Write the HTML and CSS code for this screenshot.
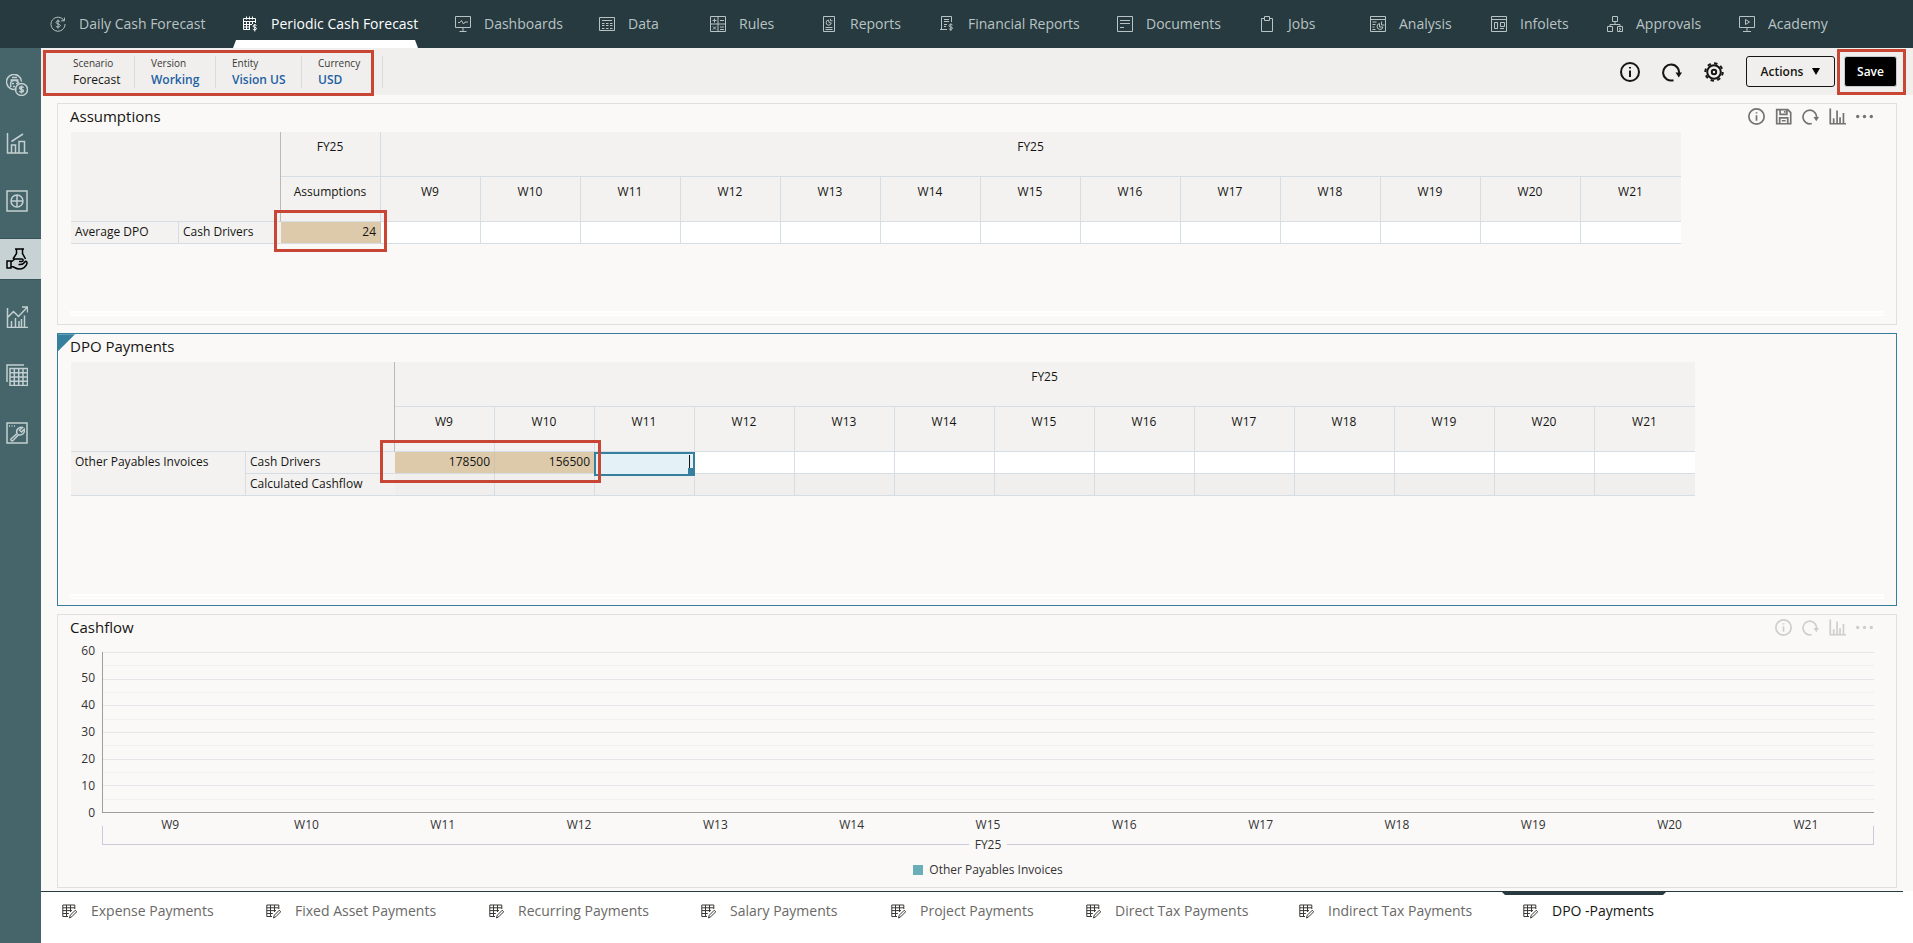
FILE: index.html
```html
<!DOCTYPE html>
<html lang="en">
<head>
<meta charset="utf-8">
<title>Periodic Cash Forecast</title>
<meta name="viewport" content="width=device-width, initial-scale=1">
<link rel="stylesheet" href="styles.css">
</head>
<body>
<svg class="sprite" aria-hidden="true">
  <symbol id="i-daily" viewBox="0 0 16 16"><path d="M14 4.6A7 7 0 1 0 15 8M14.4 1.6v3.2h-3.2M10.2 5.8C9.6 4.6 6 4.5 6 6.4s4.3 1.2 4.3 3.1S6.400 11.500 5.800 10.200M8 3.500v9"/></symbol>
  <symbol id="i-periodic" viewBox="0 0 16 16"><path d="M8 13.500H1.500v-11h12V7M1.500 5.500h12M4.500 .5v3M7.500 .5v3M10.500 .5v3M4.500 6v7M7.500 6v7M10.500 6v2M2 8.500h8M2 11h6M14.500 9.500c-.5-1-3.500-1-3.500.6s3.500.8 3.500 2.400-3 1.600-3.700.5M12.800 8v7.500"/></symbol>
  <symbol id="i-dash" viewBox="0 0 16 16"><path d="M.5.5h15v11H.5zM8 11.500v4M4.500 15.500h7M3 6.500h2l1.500-2 2 3.500L10 6h3"/></symbol>
  <symbol id="i-data" viewBox="0 0 16 16"><path d="M.5 1.500h15v13H.5zM3 4.500h10M3 7.500h2.500M7 7.500h2.500M11 7.500h2.500M3 9.500h2.500M7 9.500h2.500M11 9.500h2.500M3 12.500h2.500M7 12.500h2.500M11 12.500h2.500"/></symbol>
  <symbol id="i-rules" viewBox="0 0 16 16"><path d="M.5.5h15v15H.5zM8 .5v15M.5 8h15M4.500 2.500v4M2.500 4.500h4M10 4.500h4M3 10.500l3 3M6 10.500l-3 3M10 11h4M10 13.500h4"/></symbol>
  <symbol id="i-reports" viewBox="0 0 16 16"><path d="M2.500.5h11v15h-11zM4.500 11.500h7M4.500 13.500h7M7.500 4a2.600 2.600 0 1 0 2.800 3L8 6.500zM9.500 2.800v2h2"/></symbol>
  <symbol id="i-fin" viewBox="0 0 16 16"><path d="M8 13.500H2.500V.500h10V6M1 13.500h5M5 3.500h5M5 5.500h5M5 8.500h3M5 10.500h2M13.500 9c-.5-1-3.500-1-3.500.7s3.500.8 3.500 2.400-3 1.600-3.700.5M11.800 7.500v7.500"/></symbol>
  <symbol id="i-docs" viewBox="0 0 16 16"><path d="M.5.500h15v15H.5zM3 4.500h10M3 7.500h10M3 11.500h4"/></symbol>
  <symbol id="i-jobs" viewBox="0 0 16 16"><path d="M5.500 2.500h-3v13h11v-13h-3M5.500.500h5v4h-5z"/></symbol>
  <symbol id="i-analysis" viewBox="0 0 16 16"><path d="M.5.500h15v15H.5zM.5 3.500h15M2.500 6h4M2.500 8.500h3M2.500 11h2M2.500 13.500h3M9.500 7.500a3 3 0 1 0 3.500 3.500h-3.500zM11.500 5.500v3.500h3"/></symbol>
  <symbol id="i-infolets" viewBox="0 0 16 16"><path d="M.5.500h15v15H.5zM.5 3.500h15M3.500 6.500h3v6h-3zM9.500 6.500h4v4h-4zM9 12.500h4"/></symbol>
  <symbol id="i-approvals" viewBox="0 0 16 16"><path d="M5.500.500h5v5h-5zM8 5.500v3M3 11V8.500h10V11M.5 10.500h5v5h-5zM10.500 10.500h5v5h-5zM12 12l2 1.300-2 1.200"/></symbol>
  <symbol id="i-academy" viewBox="0 0 16 16"><path d="M.5.500h15v11H.5zM8 11.500v4M4 15.500h8M6.500 3.500v5l4-2.500z"/></symbol>

  <symbol id="s-cash" viewBox="0 0 22 22"><path d="M10.500 15A7.500 7.500 0 1 1 15.500 7.500M5 13c-1-4 0-6 2-6.500h3c1.500.5 2.500 1.500 3 3M4.500 6h8M6 3.500h5M6 9.500h2M10 9.500h2M7 12.500h2"/><circle cx="15.500" cy="15.500" r="6"/><path d="M17.500 13.700c-.6-1.300-4-1.200-4 .4s4 1 4 2.700-3.500 1.500-4 .2M15.500 11.500v8"/></symbol>
  <symbol id="s-bars" viewBox="0 0 22 22"><path d="M1.500 1v20H22M5.500 21v-8h4v8M13 21V9.500h5.500V21M5.500 9.500L17 2"/></symbol>
  <symbol id="s-plus" viewBox="0 0 22 22"><path d="M1 1h20v20H1zM11 5v12M5 11h12"/><circle cx="11" cy="11" r="6"/></symbol>
  <symbol id="s-hand" viewBox="0 0 22 22"><path d="M9 1h9M10.500 1.500v4L7 11M16.500 1.500v4l3 5.500M1 13h4v7H1zM5 14l4-3h7c1.500 0 1.500 2.500 0 2.500h-3M5 18.500c4 0 4 2.500 8 2.500s7-2.500 8-5.500c.3-2-1.500-3-2-1.500-1.500 2-3 3-6.500 2.500"/></symbol>
  <symbol id="s-trend" viewBox="0 0 22 22"><path d="M1.500 2v19.500H22M2 11l5.500-5.500 5 5L21 1.500M16 1h5.500v5.500M5.500 21v-6M9.500 21v-9M13 21v-6M18.500 21V9.500M15.500 21v-8"/></symbol>
  <symbol id="s-grid" viewBox="0 0 22 22"><path d="M1 18V1h17M4 4.500h17.500v17H4zM8.300 4.500v17M12.700 4.500v17M17 4.500v17M4 8.700h17.500M4 13h17.500M4 17.200h17.500"/></symbol>
  <symbol id="s-tool" viewBox="0 0 22 22"><path d="M1 1h20v20H1zM3 4h1M5.500 4h1M8 4h1M16.500 5.500a4.500 4.500 0 0 0-5.500 6l-6 5.500c-.8 1 .8 2.500 1.800 1.700l5.700-6a4.500 4.500 0 0 0 5.800-5.500L15.500 10 13.500 8z"/></symbol>

  <symbol id="t-info" viewBox="0 0 20 20"><circle cx="10" cy="10" r="9"/><path d="M10 8.500V15M10 5v1.600"/></symbol>
  <symbol id="t-refresh" viewBox="0 0 20 20"><path d="M11.500 18.200A8 8 0 1 1 17 12"/><path class="solid" d="M13.500 10.500h6.500l-3.200 5z"/></symbol>
  <symbol id="t-gear" viewBox="0 0 20 20"><circle cx="10" cy="10" r="6.800"/><circle cx="10" cy="10" r="2.200"/><circle class="teeth" cx="10" cy="10" r="8.700"/></symbol>
  <symbol id="t-save" viewBox="0 0 20 20"><path d="M2 2h13l3.500 3.500V18.500H2zM6 2v5.500h8V2M5.500 18.500v-7h9.500v7M8 15h4.500M11.500 3.500v2"/></symbol>
  <symbol id="t-chart" viewBox="0 0 20 20"><path d="M1.500.500V18.500H20M5.500 18V12M9.500 18V3M13 18v-7M17 18V6"/></symbol>
  <symbol id="t-more" viewBox="0 0 20 20"><circle class="solid" cx="2" cy="10" r="2"/><circle class="solid" cx="10" cy="10" r="2"/><circle class="solid" cx="18" cy="10" r="2"/></symbol>
  <symbol id="b-form" viewBox="0 0 15 15"><path d="M6 12.500H.8V1h12v4M.8 3.800h12M4.500 1v11.500M8.500 1v7M.8 6.600H10M.8 9.500h6M7.500 14l.8-2.800 5-5 1.400 1.600-5 5z"/></symbol>
</svg>

<header class="topnav">
  <nav aria-label="Clusters">
    <ul class="clusters">
      <li><a href="#"><svg><use href="#i-daily"/></svg>Daily Cash Forecast</a></li>
      <li class="current"><a href="#" aria-current="page"><svg><use href="#i-periodic"/></svg>Periodic Cash Forecast</a></li>
      <li><a href="#"><svg><use href="#i-dash"/></svg>Dashboards</a></li>
      <li><a href="#"><svg><use href="#i-data"/></svg>Data</a></li>
      <li><a href="#"><svg><use href="#i-rules"/></svg>Rules</a></li>
      <li><a href="#"><svg><use href="#i-reports"/></svg>Reports</a></li>
      <li><a href="#"><svg><use href="#i-fin"/></svg>Financial Reports</a></li>
      <li><a href="#"><svg><use href="#i-docs"/></svg>Documents</a></li>
      <li><a href="#"><svg><use href="#i-jobs"/></svg>Jobs</a></li>
      <li><a href="#"><svg><use href="#i-analysis"/></svg>Analysis</a></li>
      <li><a href="#"><svg><use href="#i-infolets"/></svg>Infolets</a></li>
      <li><a href="#"><svg><use href="#i-approvals"/></svg>Approvals</a></li>
      <li><a href="#"><svg><use href="#i-academy"/></svg>Academy</a></li>
    </ul>
  </nav>
</header>

<div class="shell">
  <nav class="sidebar" aria-label="Cards">
    <a href="#" aria-label="Cash summary"><svg><use href="#s-cash"/></svg></a>
    <a href="#" aria-label="Drivers"><svg><use href="#s-bars"/></svg></a>
    <a href="#" aria-label="Receipts"><svg><use href="#s-plus"/></svg></a>
    <a href="#" aria-label="Payments" class="current"><svg><use href="#s-hand"/></svg></a>
    <a href="#" aria-label="Trends"><svg><use href="#s-trend"/></svg></a>
    <a href="#" aria-label="Grids"><svg><use href="#s-grid"/></svg></a>
    <a href="#" aria-label="Settings"><svg><use href="#s-tool"/></svg></a>
  </nav>

  <div class="workspace">
    <div class="toolbar">
      <div class="pov-wrap">
        <dl class="pov">
          <div><dt>Scenario</dt><dd>Forecast</dd></div>
          <div><dt>Version</dt><dd><a href="#">Working</a></dd></div>
          <div><dt>Entity</dt><dd><a href="#">Vision US</a></dd></div>
          <div><dt>Currency</dt><dd><a href="#">USD</a></dd></div>
        </dl>
        <span class="callout callout-pov"></span>
      </div>
      <div class="tools">
        <button class="icon" aria-label="Information"><svg><use href="#t-info"/></svg></button>
        <button class="icon" aria-label="Refresh"><svg><use href="#t-refresh"/></svg></button>
        <button class="icon" aria-label="Settings"><svg><use href="#t-gear"/></svg></button>
        <button class="actions">Actions<span class="caret"></span></button>
        <div class="save-wrap"><button class="save">Save</button><span class="callout callout-save"></span></div>
      </div>
    </div>

    <main class="panels">
      <section class="panel panel-a">
        <div class="panel-head">
          <h2>Assumptions</h2>
          <div class="panel-tools">
            <button aria-label="Information"><svg><use href="#t-info"/></svg></button>
            <button aria-label="Save form"><svg><use href="#t-save"/></svg></button>
            <button aria-label="Refresh form"><svg><use href="#t-refresh"/></svg></button>
            <button aria-label="Chart"><svg><use href="#t-chart"/></svg></button>
            <button aria-label="More"><svg><use href="#t-more"/></svg></button>
          </div>
        </div>
        <div class="grid-wrap">
          <table class="grid grid-a">
            <colgroup><col class="c-dpo"><col class="c-driver"><col span="14"></colgroup>
            <thead>
              <tr><td class="corner" colspan="2" rowspan="2"></td><th>FY25</th><th colspan="13">FY25</th></tr>
              <tr><th>Assumptions</th><th>W9</th><th>W10</th><th>W11</th><th>W12</th><th>W13</th><th>W14</th><th>W15</th><th>W16</th><th>W17</th><th>W18</th><th>W19</th><th>W20</th><th>W21</th></tr>
            </thead>
            <tbody>
              <tr><th class="row">Average DPO</th><th class="row last">Cash Drivers</th><td class="dirty">24<span class="callout callout-one"></span></td><td></td><td></td><td></td><td></td><td></td><td></td><td></td><td></td><td></td><td></td><td></td><td></td><td></td></tr>
            </tbody>
          </table>
        </div>
        <div class="track"></div>
      </section>

      <section class="panel panel-b selected">
        <div class="panel-head"><h2>DPO Payments</h2></div>
        <div class="grid-wrap">
          <table class="grid grid-b">
            <colgroup><col class="c-account"><col class="c-flow"><col span="13"></colgroup>
            <thead>
              <tr><td class="corner" colspan="2" rowspan="2"></td><th colspan="13">FY25</th></tr>
              <tr><th>W9</th><th>W10</th><th>W11</th><th>W12</th><th>W13</th><th>W14</th><th>W15</th><th>W16</th><th>W17</th><th>W18</th><th>W19</th><th>W20</th><th>W21</th></tr>
            </thead>
            <tbody>
              <tr><th class="row" rowspan="2">Other Payables Invoices</th><th class="row last">Cash Drivers</th><td class="dirty">178500<span class="callout callout-two"></span></td><td class="dirty">156500</td><td class="editing"><input type="text" aria-label="Cash Drivers W11"></td><td></td><td></td><td></td><td></td><td></td><td></td><td></td><td></td><td></td><td></td></tr>
              <tr class="calc"><th class="row last">Calculated Cashflow</th><td></td><td></td><td></td><td></td><td></td><td></td><td></td><td></td><td></td><td></td><td></td><td></td><td></td></tr>
            </tbody>
          </table>
        </div>
        <div class="track"></div>
      </section>

      <section class="panel panel-c">
        <div class="panel-head">
          <h2>Cashflow</h2>
          <div class="panel-tools muted">
            <button aria-label="Chart information"><svg><use href="#t-info"/></svg></button>
            <button aria-label="Refresh chart"><svg><use href="#t-refresh"/></svg></button>
            <button aria-label="Chart type"><svg><use href="#t-chart"/></svg></button>
            <button aria-label="More chart options"><svg><use href="#t-more"/></svg></button>
          </div>
        </div>
        <div class="chart">
          <div class="y-axis"><span>60</span><span>50</span><span>40</span><span>30</span><span>20</span><span>10</span><span>0</span></div>
          <div class="plot"><i></i><i></i><i></i><i></i><i></i><i></i><i></i><i></i><i></i><i></i><i></i><i></i></div>
          <div class="x-axis">
            <div class="weeks"><span>W9</span><span>W10</span><span>W11</span><span>W12</span><span>W13</span><span>W14</span><span>W15</span><span>W16</span><span>W17</span><span>W18</span><span>W19</span><span>W20</span><span>W21</span></div>
            <div class="year"><span>FY25</span></div>
            <div class="legend"><span class="swatch"></span>Other Payables Invoices</div>
          </div>
        </div>
      </section>
    </main>

    <nav class="tabs" aria-label="Forms">
      <ul>
        <li><a href="#"><svg><use href="#b-form"/></svg>Expense Payments</a></li>
        <li><a href="#"><svg><use href="#b-form"/></svg>Fixed Asset Payments</a></li>
        <li><a href="#"><svg><use href="#b-form"/></svg>Recurring Payments</a></li>
        <li><a href="#"><svg><use href="#b-form"/></svg>Salary Payments</a></li>
        <li><a href="#"><svg><use href="#b-form"/></svg>Project Payments</a></li>
        <li><a href="#"><svg><use href="#b-form"/></svg>Direct Tax Payments</a></li>
        <li><a href="#"><svg><use href="#b-form"/></svg>Indirect Tax Payments</a></li>
        <li class="current"><a href="#" aria-current="page"><svg><use href="#b-form"/></svg>DPO -Payments</a></li>
      </ul>
    </nav>
  </div>
</div>
</body>
</html>
```

FILE: styles.css
```css
*, *::before, *::after { box-sizing: border-box; }

body {
  margin: 0;
  min-height: 100vh;
  display: flex;
  flex-direction: column;
  background: #faf9f8;
  color: #161513;
  font: 12px/16px "Open Sans", "Noto Sans", sans-serif;
}

ul, dl, dd, h2 { margin: 0; padding: 0; }
ul { list-style: none; }
a { color: inherit; text-decoration: none; }
button { font: inherit; color: inherit; padding: 0; border: 0; background: none; cursor: pointer; }
svg { fill: none; stroke: currentColor; flex: none; display: block; }
.sprite { position: absolute; width: 0; height: 0; }
.solid { fill: currentColor; stroke: none; }
.teeth { stroke-width: 2; stroke-dasharray: 3.4 3.4; }

/* Top navigation */
.topnav { background: #263a40; color: #bac3c3; height: 48px; padding-left: 30px; }
.clusters {
  display: grid;
  grid-template-columns: 192px 213px 144px 111px 111px 118px 178px 142px 111px 121px 116px 132px 128px;
}
.clusters li { position: relative; }
.clusters a { display: flex; align-items: center; gap: 13px; height: 48px; padding-left: 20px; font-size: 14px; white-space: nowrap; }
.clusters svg { width: 16px; height: 16px; }
.clusters .current { color: #fff; }
.clusters .current::after {
  content: "";
  position: absolute;
  left: 11px; right: 17px; bottom: 0;
  height: 8px;
  background: #fff;
  clip-path: polygon(3px 0, calc(100% - 3px) 0, 100% 100%, 0 100%);
}

/* Shell */
.shell { flex: 1; display: flex; }
.sidebar { width: 41px; flex: none; background: #45656b; color: #c3cfd0; padding-top: 16px; display: flex; flex-direction: column; gap: 16px; }
.sidebar a { height: 42px; display: flex; align-items: center; padding-left: 6px; }
.sidebar svg { width: 22px; height: 22px; stroke-width: 1.5; }
.sidebar .current { background: #c7d2d4; color: #000; border: solid #38545a; border-width: 1px 0; }
.workspace { flex: 1; min-width: 0; display: flex; flex-direction: column; }

/* Toolbar */
.toolbar { height: 47px; background: #f0efed; display: flex; justify-content: space-between; align-items: center; padding: 0 16px; }
.pov-wrap { position: relative; }
.pov { display: grid; grid-template-columns: 78px 81px 86px 81px; }
.pov div { height: 32px; padding-left: 16px; border-right: 1px solid #dcdbd9; }
.pov dt { font-size: 10px; line-height: 14px; color: #3a3835; }
.pov dd { line-height: 20px; white-space: nowrap; }
.pov a { color: #1f5fa3; font-weight: 600; }
.callout { position: absolute; border: 3px solid #c74634; pointer-events: none; z-index: 2; }
.callout-pov { left: -14px; right: 9px; top: -6px; bottom: -8px; }
.callout-save { inset: -7px -9px -8px -7px; }
.callout-one { left: -7px; right: -7px; top: -12px; bottom: -9px; }
.callout-two { left: -15px; top: -12px; width: 221px; height: 43px; }
.tools { display: flex; align-items: center; }
.icon { margin-right: 22px; }
.icon svg { width: 20px; height: 20px; stroke-width: 2; }
.actions, .save { height: 31px; border-radius: 3px; font-weight: 600; display: flex; align-items: center; justify-content: center; }
.actions { width: 89px; border: 1px solid #161513; gap: 9px; margin-right: 9px; }
.caret { border: 4px solid transparent; border-top: 7px solid #000; border-bottom: 0; }
.save-wrap { position: relative; }
.save { width: 53px; background: #000; color: #fff; border: 1px solid #c4cdd2; }

/* Panels */
.panels { flex: 1; display: flex; flex-direction: column; gap: 8px; padding: 8px 16px 3px; }
.panel { position: relative; display: flex; flex-direction: column; flex-basis: 0; border: 1px solid #e1e0de; padding: 0 12px; }
.panel-a { flex-grow: 222; }
.panel-b { flex-grow: 273; }
.panel-c { flex-grow: 274; }
.panel.selected { border-color: #367f9e; }
.panel.selected::before {
  content: "";
  position: absolute;
  left: 0; top: 0;
  width: 17px; height: 17px;
  background: #367f9e;
  clip-path: polygon(0 0, 100% 0, 0 100%);
}
.panel-head { display: flex; justify-content: space-between; align-items: center; height: 24px; margin-bottom: 4px; }
.panel h2 { font-size: 15px; line-height: 20px; font-weight: 400; position: relative; }
.panel-tools { display: flex; gap: 10px; color: #75736f; padding-right: 11px; }
.panel-tools svg { width: 17px; height: 17px; stroke-width: 2; }
.panel-tools.muted { color: #cfcecc; }
.grid-wrap { flex: 1; overflow-x: auto; overflow-y: hidden; padding-left: 1px; }
.track { height: 5px; margin: 0 0 8px; border: solid #fff; border-width: 2px 0; }
.panel-b .track { margin-bottom: 6px; }

/* Data grids */
.grid { table-layout: fixed; border-collapse: separate; border-spacing: 0; }
.grid-a { width: 1610px; }
.grid-b { width: 1624px; }
.grid col { width: 100px; }
.grid .c-dpo { width: 108px; }
.grid .c-driver { width: 102px; }
.grid .c-account { width: 175px; }
.grid .c-flow { width: 149px; }
.grid th, .grid td { font-weight: 400; padding: 0; border: solid #d5dde5; border-width: 0 1px 1px 0; }
.grid tr > :last-child { border-right: 0; }
.grid thead th { height: 45px; background: #f3f2f0; vertical-align: top; padding: 7px 1px 0 0; }
.grid .corner { background: #f3f2f0; border-right-color: #b9b9b9; }
.grid tbody td { height: 22px; background: #fff; text-align: right; padding: 0 4px 2px 0; position: relative; }
.grid .row { background: #f3f2f0; text-align: left; vertical-align: top; height: 22px; padding: 2px 4px 0; white-space: nowrap; }
.grid .last { border-right-color: #f3f2f0; }
.grid tbody .dirty { background: #dccaab; border-right-color: #d0c3a9; }
.grid .calc td { background: #f0efed; }
.grid tbody .editing { padding: 0; }
.editing input {
  position: absolute;
  inset: 0 -1px -2px -1px;
  width: calc(100% + 2px);
  height: 24px;
  border: 2px solid #367f9e;
  background: #e4f1f7;
  padding: 0 4px;
  font: inherit;
  text-align: right;
  border-radius: 0;
  outline: 0;
  z-index: 1;
}
.editing::before { content: ""; position: absolute; z-index: 2; right: 4px; top: 3px; width: 1px; height: 13px; background: #161513; }
.editing::after { content: ""; position: absolute; z-index: 2; right: -1px; bottom: -2px; width: 7px; height: 7px; background: #367f9e; }

/* Chart */
.chart { flex: 1; display: grid; grid-template: 1fr auto / 32px 1fr; padding: 9px 10px 0 0; color: #333; }
.y-axis { display: flex; flex-direction: column; justify-content: space-between; margin: -9px 7px -8px 0; text-align: right; }
.plot { display: grid; grid-template-rows: repeat(12, 1fr); border: solid #9e9e9e; border-width: 0 0 1px 1px; }
.plot i { border-top: 1px solid #f0f0ef; }
.plot i:nth-child(odd) { border-top-color: #e4e6e9; }
.x-axis { grid-column: 2; text-align: center; padding-top: 4px; }
.weeks { display: grid; grid-template-columns: repeat(13, 1fr); }
.year { display: grid; grid-template-columns: 1fr auto 1fr; gap: 6px; align-items: end; margin-top: -7px; }
.year::before, .year::after { content: ""; height: 19px; border: solid #cbcada; border-width: 0 0 1px 1px; margin-bottom: 8px; }
.year::after { border-width: 0 1px 1px 0; }
.year span { padding-top: 11px; }
.legend { display: flex; justify-content: center; align-items: center; gap: 6px; padding: 9px 0; }
.swatch { width: 10px; height: 10px; background: #6aafb8; }

/* Form tabs */
.tabs { position: relative; background: #fff; min-height: 52px; color: #6b6966; }
.tabs::before { content: ""; display: block; height: 1px; margin-right: 10px; background: #263a40; }
.tabs ul { display: grid; grid-template-columns: 204px 223px 212px 190px 195px 213px 221px 167px; }
.tabs li { position: relative; }
.tabs a { display: flex; align-items: center; gap: 14px; height: 38px; padding-left: 21px; font-size: 14px; white-space: nowrap; }
.tabs svg { width: 15px; height: 15px; color: #3a3835; }
.tabs .current { color: #161513; }
.tabs .current a { padding-left: 24px; }
.tabs .current::before {
  content: "";
  position: absolute;
  top: 0; left: 3px; right: 0;
  height: 3px;
  background: #263a40;
  clip-path: polygon(0 0, 100% 0, calc(100% - 3px) 100%, 3px 100%);
}
```
